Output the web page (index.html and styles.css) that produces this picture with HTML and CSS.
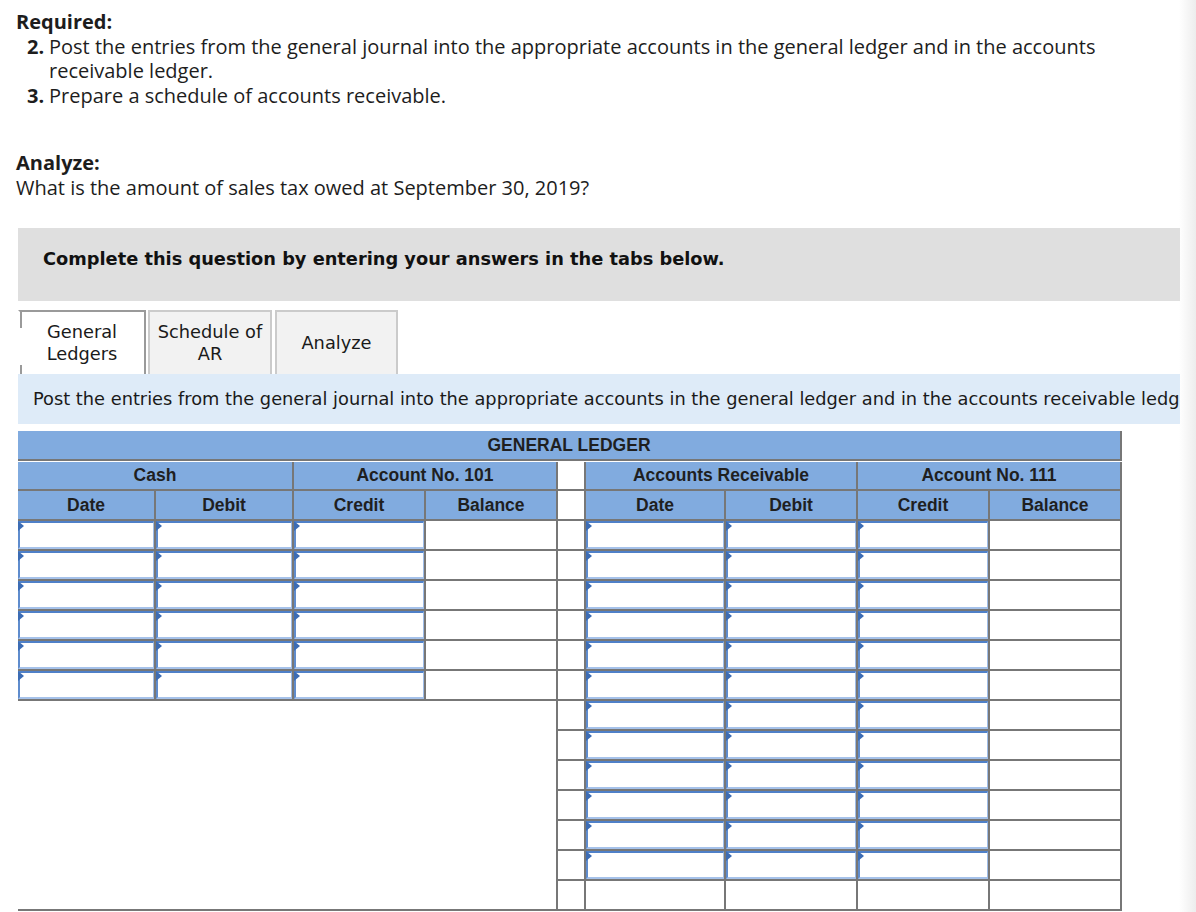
FILE: index.html
```html
<!DOCTYPE html>
<html lang="en">
<head>
<meta charset="utf-8">
<title>General Ledger</title>
<link rel="stylesheet" href="styles.css">
</head>
<body>
<div class="page">
  <div class="required">
    <div class="label">Required:</div>
    <ol class="steps">
      <li><span class="num">2.</span><span>Post the entries from the general journal into the appropriate accounts in the general ledger and in the accounts receivable ledger.</span></li>
      <li><span class="num">3.</span><span>Prepare a schedule of accounts receivable.</span></li>
    </ol>
  </div>
  <div class="analyze">
    <div class="label">Analyze:</div>
    <p>What is the amount of sales tax owed at September 30, 2019?</p>
  </div>

  <div class="banner">Complete this question by entering your answers in the tabs below.</div>

  <div class="tabs">
    <div class="tab tab-active tab-1">General<br>Ledgers</div>
    <div class="tab tab-2">Schedule of<br>AR</div>
    <div class="tab tab-3">Analyze</div>
  </div>

  <div class="instr"><span>Post the entries from the general journal into the appropriate accounts in the general ledger and in the accounts receivable ledger.</span></div>

  <div class="ledger">
    <div class="h title">GENERAL LEDGER</div>

    <div class="h s2">Cash</div>
    <div class="h s2">Account No. 101</div>
    <div class="gap"></div>
    <div class="h s2">Accounts Receivable</div>
    <div class="h s2">Account No. 111</div>

    <div class="h">Date</div><div class="h">Debit</div><div class="h">Credit</div><div class="h">Balance</div>
    <div class="gap"></div>
    <div class="h">Date</div><div class="h">Debit</div><div class="h">Credit</div><div class="h">Balance</div>

    <!-- rows 1-6: both accounts -->
    <div class="c"><span class="inp"></span></div><div class="c"><span class="inp"></span></div><div class="c"><span class="inp"></span></div><div class="c"></div>
    <div class="gap"></div>
    <div class="c"><span class="inp"></span></div><div class="c"><span class="inp"></span></div><div class="c"><span class="inp"></span></div><div class="c"></div>

    <div class="c"><span class="inp"></span></div><div class="c"><span class="inp"></span></div><div class="c"><span class="inp"></span></div><div class="c"></div>
    <div class="gap"></div>
    <div class="c"><span class="inp"></span></div><div class="c"><span class="inp"></span></div><div class="c"><span class="inp"></span></div><div class="c"></div>

    <div class="c"><span class="inp"></span></div><div class="c"><span class="inp"></span></div><div class="c"><span class="inp"></span></div><div class="c"></div>
    <div class="gap"></div>
    <div class="c"><span class="inp"></span></div><div class="c"><span class="inp"></span></div><div class="c"><span class="inp"></span></div><div class="c"></div>

    <div class="c"><span class="inp"></span></div><div class="c"><span class="inp"></span></div><div class="c"><span class="inp"></span></div><div class="c"></div>
    <div class="gap"></div>
    <div class="c"><span class="inp"></span></div><div class="c"><span class="inp"></span></div><div class="c"><span class="inp"></span></div><div class="c"></div>

    <div class="c"><span class="inp"></span></div><div class="c"><span class="inp"></span></div><div class="c"><span class="inp"></span></div><div class="c"></div>
    <div class="gap"></div>
    <div class="c"><span class="inp"></span></div><div class="c"><span class="inp"></span></div><div class="c"><span class="inp"></span></div><div class="c"></div>

    <div class="c"><span class="inp"></span></div><div class="c"><span class="inp"></span></div><div class="c"><span class="inp"></span></div><div class="c"></div>
    <div class="gap"></div>
    <div class="c"><span class="inp"></span></div><div class="c"><span class="inp"></span></div><div class="c"><span class="inp"></span></div><div class="c"></div>

    <!-- empty area below cash -->
    <div class="blank"></div>

    <!-- rows 7-12: accounts receivable only -->
    <div class="gap"></div>
    <div class="c"><span class="inp"></span></div><div class="c"><span class="inp"></span></div><div class="c"><span class="inp"></span></div><div class="c"></div>
    <div class="gap"></div>
    <div class="c"><span class="inp"></span></div><div class="c"><span class="inp"></span></div><div class="c"><span class="inp"></span></div><div class="c"></div>
    <div class="gap"></div>
    <div class="c"><span class="inp"></span></div><div class="c"><span class="inp"></span></div><div class="c"><span class="inp"></span></div><div class="c"></div>
    <div class="gap"></div>
    <div class="c"><span class="inp"></span></div><div class="c"><span class="inp"></span></div><div class="c"><span class="inp"></span></div><div class="c"></div>
    <div class="gap"></div>
    <div class="c"><span class="inp"></span></div><div class="c"><span class="inp"></span></div><div class="c"><span class="inp"></span></div><div class="c"></div>
    <div class="gap"></div>
    <div class="c"><span class="inp"></span></div><div class="c"><span class="inp"></span></div><div class="c"><span class="inp"></span></div><div class="c"></div>

    <!-- last empty row -->
    <div class="gap"></div>
    <div class="c"></div><div class="c"></div><div class="c"></div><div class="c"></div>
  </div>
</div>
</body>
</html>
```

FILE: styles.css
```css
* { box-sizing: border-box; }

html {
  background: linear-gradient(to right, #ffffff 0, #ffffff 1179px, #ededed 1196px);
}

body {
  margin: 0;
  color: #1d1d1d;
  font-family: "Open Sans", "Liberation Sans", sans-serif;
}

.page {
  padding-top: 10px;
}

.required,
.analyze {
  font-family: "Open Sans", "Liberation Sans", sans-serif;
  font-size: 20px;
  line-height: 24.5px;
  padding-left: 16px;
  color: #1d1d1d;
}

.label { font-weight: 700; }

.steps {
  list-style: none;
  margin: 0;
  padding: 0 0 0 11px;
  width: 1140px;
}

.steps li { display: flex; }

.num {
  flex: none;
  width: 22px;
  font-weight: 700;
}

.analyze { margin-top: 43px; }
.analyze p { margin: 0; }

.banner {
  margin: 28px 0 0 18px;
  width: 1162px;
  height: 73px;
  background: #dfdfdf;
  padding: 21px 25px 0;
  font-family: "DejaVu Sans", Verdana, sans-serif;
  font-weight: 700;
  font-size: 17.8px;
  line-height: 20px;
  color: #111;
}

.tabs {
  display: flex;
  margin: 9px 0 0 18px;
  height: 64px;
}

.tab {
  height: 64px;
  display: flex;
  align-items: center;
  justify-content: center;
  text-align: center;
  font-family: "DejaVu Sans", Verdana, sans-serif;
  font-size: 17.8px;
  line-height: 22px;
  color: #1a1a1a;
  background: #f2f2f2;
  border: 2px solid #cbcbcb;
  border-bottom: none;
}

.tab-active {
  background:
    linear-gradient(#9a9a9a, #9a9a9a) left top / 2px 16px no-repeat,
    linear-gradient(#9a9a9a, #9a9a9a) left bottom / 2px 9px no-repeat,
    #ffffff;
  border-color: #9a9a9a;
  border-left-color: transparent;
}

.tab-1 { width: 128px; }
.tab-2 { width: 124px; margin-left: 2px; }
.tab-3 { width: 123px; margin-left: 3px; }

.instr {
  margin-left: 18px;
  width: 1162px;
  height: 50px;
  background: #deebf8;
  padding-left: 15px;
  font-family: "DejaVu Sans", Verdana, sans-serif;
  font-size: 17.8px;
  line-height: 50px;
  color: #1a1a1a;
  white-space: nowrap;
  overflow: hidden;
}

.ledger {
  margin: 7px 0 0 18px;
  width: 1104px;
  display: grid;
  grid-template-columns: 138px 138px 132px 132px 28px 140px 132px 132px 132px;
  grid-template-rows: 31px 29px 30px repeat(13, 30px);
}

.h, .c, .gap, .blank {
  border-right: 2px solid #777777;
  border-bottom: 2px solid #777777;
}

.h {
  background: #81abdf;
  display: flex;
  align-items: center;
  justify-content: center;
  font-family: "Liberation Sans", Arial, sans-serif;
  font-weight: 700;
  font-size: 17.5px;
  color: #1f1f1f;
}

.title {
  grid-column: 1 / -1;
  height: 30px;
}

.s2 { grid-column: span 2; }

.gap, .c { background: #ffffff; }

.blank {
  grid-column: 1 / 5;
  grid-row: 10 / span 7;
}

.inp {
  display: block;
  position: relative;
  height: 100%;
  background: #ffffff;
  border: 1px solid #9fbde8;
  border-top: 2px solid #4f80c8;
  border-left: 2px solid #5f8ccd;
  border-bottom: 2px solid #a6c2ea;
}

.inp::before {
  content: "";
  position: absolute;
  left: -2px;
  top: -2px;
  border-left: 6px solid #3c6cb4;
  border-top: 5px solid transparent;
  border-bottom: 5px solid transparent;
}
```
